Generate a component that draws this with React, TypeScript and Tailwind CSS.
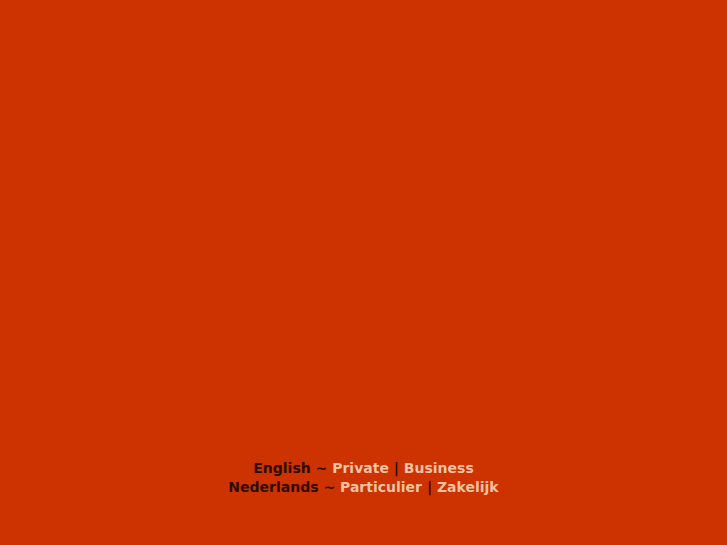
export default function App() {
  const dark = 'text-[#2e0c02]';
  const light = 'text-[#f0c2a2]';
  return (
    <div className="h-[545px] w-full bg-[#cc3300] flex flex-col justify-end items-center pb-[48px] font-['DejaVu_Sans',sans-serif] font-bold text-[14px] leading-[19px]">
      <p className="text-center">
        <span className={dark}>English ~ </span>
        <a className={light}>Private</a>
        <span className={dark}> | </span>
        <a className={light}>Business</a>
      </p>
      <p className="text-center">
        <span className={dark}>Nederlands ~ </span>
        <a className={light}>Particulier</a>
        <span className={dark}> | </span>
        <a className={light}>Zakelijk</a>
      </p>
    </div>
  );
}
